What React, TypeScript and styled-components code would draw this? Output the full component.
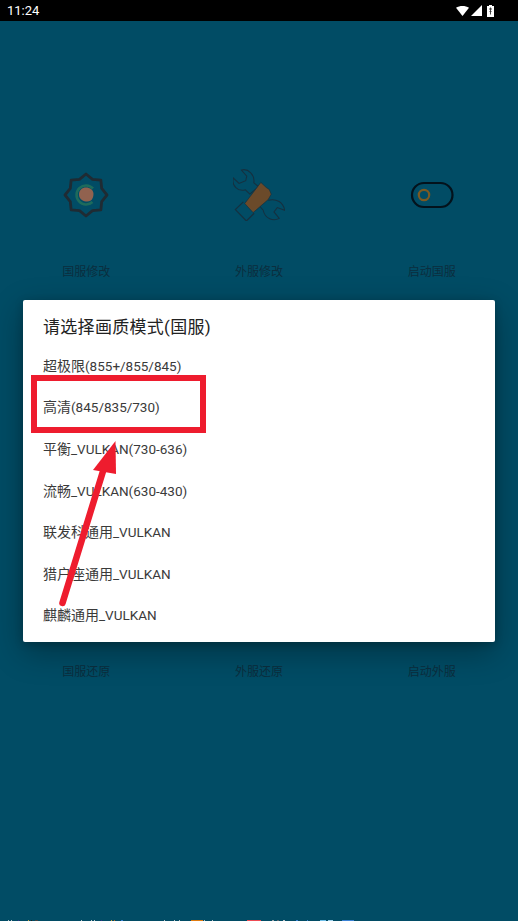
import React from "react";
import styled, { createGlobalStyle } from "styled-components";

const Global = createGlobalStyle`
  html, body { margin: 0; padding: 0; background: #014c65; }
  * { box-sizing: border-box; }
`;
const Page = styled.div`
  position: relative; width: 518px; height: 921px; overflow: hidden;
  background: #014c65; display: flex; flex-direction: column;
  font-family: "Roboto", "Noto Sans CJK SC", sans-serif;
`;
const StatusBar = styled.div`
  height: 21px; flex: none; background: #000; color: #fff; display: flex;
  align-items: center; justify-content: space-between; padding: 0 24px 0 7px;
  font-size: 13px; line-height: 21px;
`;
const StatusIcons = styled.div`display: flex; align-items: center; gap: 2px;`;
const BatterySlot = styled.span`display: flex; margin-left: 3px;`;
const Grid = styled.div`
  display: grid; grid-template-columns: repeat(3, 1fr); padding-top: 142px;
`;
const Tile = styled.div`
  height: 400px; display: flex; flex-direction: column; align-items: center;
`;
const IconSlot = styled.div`
  width: 64px; height: 64px; display: flex; align-items: center; justify-content: center;
`;
const TileLabel = styled.div`
  margin-top: 35px; font-size: 12px; line-height: 20px; color: #0b2e3e;
`;
const Dialog = styled.div`
  position: absolute; left: 23px; top: 300px; width: 472px; height: 342px;
  background: #fff; border-radius: 2px; padding: 15px 20px 0;
  box-shadow: 0 10px 32px rgba(0, 0, 0, .32), 0 2px 8px rgba(0, 0, 0, .2);
`;
const Title = styled.div`
  font-size: 17px; letter-spacing: .3px; line-height: 24px; color: #222; margin-bottom: 5px;
`;
const Option = styled.div`
  height: 41.6px; display: flex; align-items: center; font-size: 14px; color: #3a3a3a;
`;
const Latin = styled.span`font-size: 13.5px;`;
const Highlight = styled.div`
  position: absolute; left: 31px; top: 375px; width: 175px; height: 58px;
  border: 6px solid #ee1c2e;
`;
const Arrow = styled.svg`
  position: absolute; left: 0; top: 0; pointer-events: none;
`;
const Crumbs = styled.div`
  position: absolute; left: 0; right: 0; bottom: 0; height: 1px;
`;
const Crumb = styled.i<{ $l: number; $w: number; $c: string }>`
  position: absolute; top: 0; height: 1px; left: ${p => p.$l}px; width: ${p => p.$w}px; background: ${p => p.$c};
`;

const gearPath = (() => {
  const pts: string[] = [];
  const cx = 24, cy = 24, tip = 21, valley = 17;
  for (let i = 0; i < 16; i++) {
    const a = ((i * 22.5 - 90) * Math.PI) / 180;
    const r = i % 2 === 0 ? tip : valley;
    pts.push(`${i === 0 ? "M" : "L"}${(cx + r * Math.cos(a)).toFixed(2)} ${(cy + r * Math.sin(a)).toFixed(2)}`);
  }
  return pts.join(" ") + "Z";
})();

const Gear = () => (
  <svg width="48" height="48" viewBox="0 0 48 48">
    <path d={gearPath} fill="none" stroke="#1f2b33" strokeWidth="2.800" strokeLinejoin="round" />
    <path d="M31 17.500A9.500 9.500 0 1 0 30.500 31" fill="none" stroke="#1d6b5c" strokeWidth="2.600" />
    <path d="M17 23.500c0-4.300 3-7 7-7 3.800 0 7.500 2.300 7.500 6.300 0 3-1 5.700-2.700 6.700-1.500.9-3 1.300-5 1-3.800-.5-6.800-3-6.800-7z" fill="#91624f" />
  </svg>
);
const Tools = () => (
  <svg width="52" height="52" viewBox="100 57 155 155" fill="none">
    <path d="M125 60C146 54 166 76 162 98L176 110L150 132L137 119C115 126 95 106 101 84L118 100L138 92L141 78Z" stroke="#16303f" strokeWidth="3" />
    <path d="M205 150C230 144 250 156 254 180L232 172L222 185L238 204C220 214 195 205 190 180L180 168" stroke="#16303f" strokeWidth="3" />
    <path d="M131 155L107 178L140 212L163 189" stroke="#16303f" strokeWidth="3.500" />
    <path d="M183 97L199 112L208 118L214 132L205 148L160 187L135 160Z" fill="#6b4a2a" stroke="#16303f" strokeWidth="2" />
  </svg>
);
const Toggle = () => (
  <svg width="44" height="28" viewBox="0 0 44 28" fill="none">
    <rect x="2" y="2" width="40.500" height="24" rx="12" stroke="#03121c" strokeWidth="2.200" />
    <circle cx="14" cy="14" r="5.200" stroke="#7c5a22" strokeWidth="2.200" />
  </svg>
);

const Wifi = () => (
  <svg width="13" height="10" viewBox="0 0 13 10"><path d="M0 1.800C3.700-.6 9.300-.6 13 1.800L6.500 10z" fill="#fff" /></svg>
);
const Signal = () => (
  <svg width="11" height="11" viewBox="0 0 11 11"><path d="M11 0v11H0z" fill="#fff" /></svg>
);
const Battery = () => (
  <svg width="7" height="12" viewBox="0 0 7 12">
    <path d="M2 0h3v1h2v11H0V1h2z" fill="#fff" />
    <path d="M3.500 2.500v7M2 4h3M2.500 6.500h2" stroke="#333" strokeWidth=".9" />
  </svg>
);

const options = [
  "超极限(855+/855/845)", "高清(845/835/730)", "平衡_VULKAN(730-636)", "流畅_VULKAN(630-430)",
  "联发科通用_VULKAN", "猎户座通用_VULKAN", "麒麟通用_VULKAN",
];
const splitLatin = (s: string) => s.split(/([\x00-\x7f]+)/).filter(Boolean);

const crumbs: [number, number, string][] = [
  [8, 1, "#b8c4ca"], [11, 1, "#b8c4ca"], [18, 1, "#3a2a8a"], [28, 1, "#c9a23a"], [31, 1, "#222"], [35, 3, "#444"],
  [81, 1, "#b8c4ca"], [91, 1, "#b8c4ca"], [94, 1, "#b8c4ca"], [101, 1, "#3a2a8a"], [111, 1, "#c9a23a"], [114, 1, "#b5651d"], [121, 2, "#3b82d6"],
  [164, 1, "#b8c4ca"], [174, 1, "#b8c4ca"], [179, 1, "#b8c4ca"], [191, 12, "#e07b10"], [204, 1, "#b8c4ca"], [212, 1, "#b8c4ca"],
  [247, 14, "#ee4c55"], [272, 2, "#9aa6ad"], [277, 2, "#5c6a72"], [283, 2, "#b8c4ca"],
  [296, 2, "#3b82d6"], [307, 1, "#3b82d6"], [320, 6, "#6fc0ea"], [328, 5, "#9fd3ee"],
  [342, 12, "#3b82d6"],
];

export default function App() {
  return (
    <Page>
      <Global />
      <StatusBar>
        <span>11:24</span>
        <StatusIcons><Wifi /><Signal /><BatterySlot><Battery /></BatterySlot></StatusIcons>
      </StatusBar>
      <Grid>
        <Tile><IconSlot><Gear /></IconSlot><TileLabel>国服修改</TileLabel></Tile>
        <Tile><IconSlot><Tools /></IconSlot><TileLabel>外服修改</TileLabel></Tile>
        <Tile><IconSlot><Toggle /></IconSlot><TileLabel>启动国服</TileLabel></Tile>
        <Tile><IconSlot /><TileLabel>国服还原</TileLabel></Tile>
        <Tile><IconSlot /><TileLabel>外服还原</TileLabel></Tile>
        <Tile><IconSlot /><TileLabel>启动外服</TileLabel></Tile>
      </Grid>
      <Dialog>
        <Title>请选择画质模式(国服)</Title>
        {options.map(o => (
          <Option key={o}>
            <span>
              {splitLatin(o).map((part, i) =>
                /^[\x00-\x7f]/.test(part) ? <Latin key={i}>{part}</Latin> : part
              )}
            </span>
          </Option>
        ))}
      </Dialog>
      <Highlight />
      <Arrow width="518" height="921" viewBox="0 0 518 921">
        <path d="M62.500 603L104 468" stroke="#ee1c2e" strokeWidth="6.500" strokeLinecap="round" fill="none" />
        <path d="M115.500 441L116 474L93 470z" fill="#ee1c2e" />
      </Arrow>
      <Crumbs>
        {crumbs.map(([l, w, c]) => <Crumb key={l} $l={l} $w={w} $c={c} />)}
      </Crumbs>
    </Page>
  );
}
